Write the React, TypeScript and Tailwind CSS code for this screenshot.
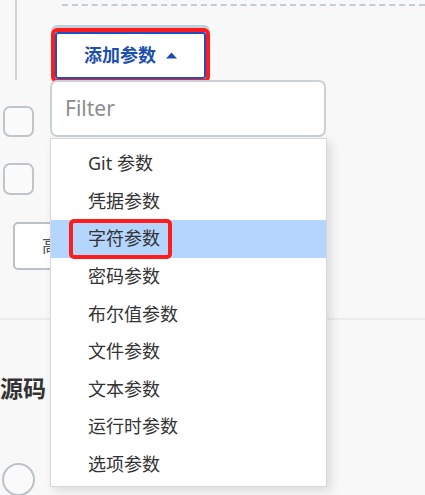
import React from "react";

const items = [
  "Git 参数",
  "凭据参数",
  "字符参数",
  "密码参数",
  "布尔值参数",
  "文件参数",
  "文本参数",
  "运行时参数",
  "选项参数",
];

export default function App() {
  return (
    <div
      className="relative w-[425px] h-[495px] overflow-hidden bg-[#f8f8f8] text-[#333]"
      style={{ fontFamily: '"Noto Sans", "Noto Sans CJK SC", sans-serif' }}
    >
      {/* build step area */}
      <div className="ml-[15px] h-[80px] border-l-2 border-[#cbd1d6]">
        <div className="ml-[45px] pt-[4px]">
          <div className="border-t-2 border-dashed border-[#c4cbd1]"></div>
        </div>
        <div className="ml-[34px] mt-[22px] inline-block rounded-[6px] border-4 border-[#ff1c1c] shadow-[0_-3px_0_0_#c3d0dc]">
          <button
            type="button"
            className="flex h-[47px] w-[151px] items-center justify-center gap-[10px] rounded-[3px] border-2 border-[#1d50c0] bg-white text-[18px] font-bold text-[#1d4fae]"
          >
            <span>添加参数</span>
            <svg width="11" height="7" viewBox="0 0 11 7">
              <path d="M0 6.5 L5.5 0.5 L11 6.5 Z" fill="#1d4fae" />
            </svg>
          </button>
        </div>
      </div>

      {/* left column (partly hidden by the menu) */}
      <div className="ml-[3px] mt-[26px] h-[31px] w-[31px] rounded-[7px] border-2 border-[#bfc6cb] bg-[#fbfbfb]"></div>
      <div className="ml-[3px] mt-[26px] h-[32px] w-[31px] rounded-[7px] border-2 border-[#bfc6cb] bg-[#fbfbfb]"></div>
      <div className="ml-[13px] mt-[27px] flex h-[48px] w-[110px] items-center rounded-[5px] border-2 border-[#bac1c7] bg-white pl-[27px] text-[17px] text-[#555]">
        高级
      </div>
      <div className="mt-[48px] border-t-2 border-[#ececec]"></div>
      <h2 className="mt-[53px] text-[23px] font-bold leading-[30px] text-[#333]">
        源码
      </h2>
      <div className="ml-[2px] mt-[60px] h-[33px] w-[33px] rounded-full border-2 border-[#bcc3c8] bg-[#fafafa]"></div>

      {/* dropdown menu */}
      <div className="absolute left-[50px] top-[80px] w-[277px]">
        <div className="flex h-[57px] w-[276px] items-center rounded-[7px] border-2 border-[#cbd2d7] bg-white pl-[13px] text-[21px] text-[#8c8c8c]">
          Filter
        </div>
        <div className="mt-[1px] h-[349px] border border-[#d3d9dd] bg-white pt-[6px] shadow-[4px_4px_10px_rgba(0,0,0,0.12)]">
          {items.map((label) => (
            <div
              key={label}
              className={
                label === "字符参数"
                  ? "relative flex h-[37.6px] items-center bg-[#b4d5fd] pl-[37px] text-[18px] text-[#333]"
                  : "relative flex h-[37.6px] items-center pl-[37px] text-[18px] text-[#333]"
              }
            >
              {label}
              {label === "字符参数" && (
                <span className="absolute left-[18px] top-[-1px] h-[40px] w-[103px] rounded-[5px] border-4 border-[#ff1c1c]"></span>
              )}
            </div>
          ))}
        </div>
      </div>
    </div>
  );
}
